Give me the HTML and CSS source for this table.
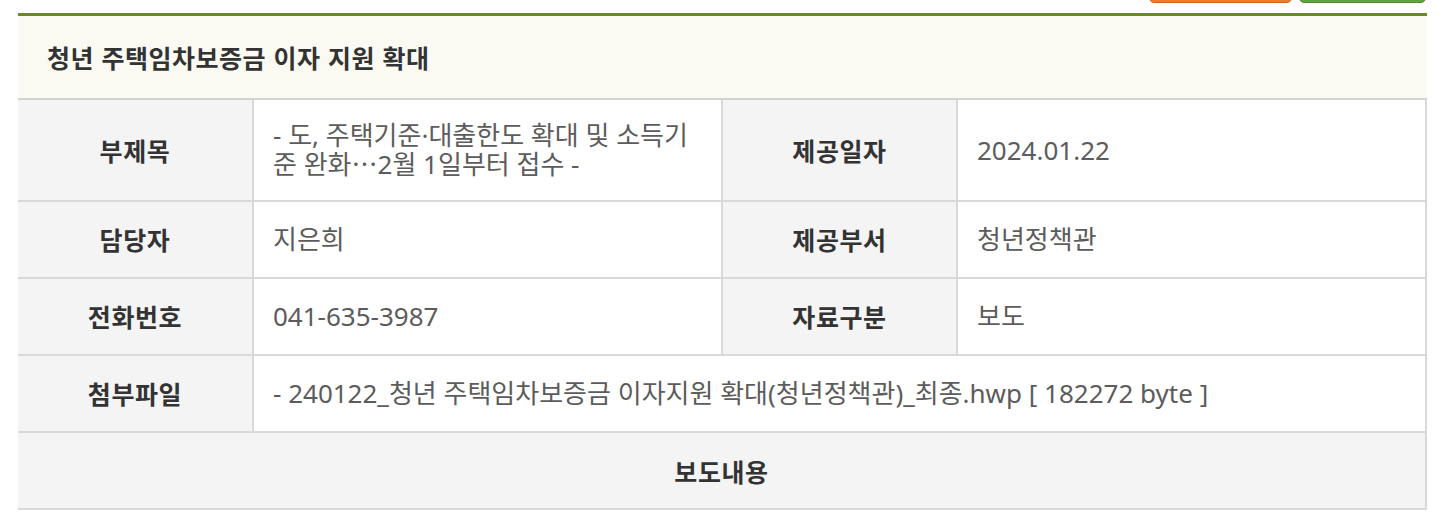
FILE: index.html
```html
<!DOCTYPE html>
<html lang="ko">
<head>
<meta charset="utf-8">
<title>청년 주택임차보증금 이자 지원 확대</title>
<link rel="stylesheet" href="styles.css">
</head>
<body>
<div class="wrap">
  <div class="btns">
    <a class="btn btn-orange" href="#">목록</a>
    <a class="btn btn-green" href="#">인쇄</a>
  </div>
  <div class="view">
    <h2 class="view-title">청년 주택임차보증금 이자 지원 확대</h2>
    <div class="info">
      <div class="th r1">부제목</div>
      <div class="td r1 wrapall">- 도, 주택기준·대출한도 확대 및 소득기준 완화<span class="cjk">…</span>2월 1일부터 접수 -</div>
      <div class="th r1">제공일자</div>
      <div class="td r1">2024.01.22</div>

      <div class="th">담당자</div>
      <div class="td">지은희</div>
      <div class="th">제공부서</div>
      <div class="td">청년정책관</div>

      <div class="th">전화번호</div>
      <div class="td">041-635-3987</div>
      <div class="th">자료구분</div>
      <div class="td">보도</div>

      <div class="th">첨부파일</div>
      <div class="td td-wide">- 240122_청년 주택임차보증금 이자지원 확대(청년정책관)_최종.hwp [ 182272 byte ]</div>

      <div class="th th-full">보도내용</div>
    </div>
  </div>
</div>
</body>
</html>
```

FILE: styles.css
```css
html, body {
  margin: 0;
  padding: 0;
  background: #fff;
}
body {
  font-family: "Noto Sans", "Noto Sans CJK KR", sans-serif;
  overflow: hidden;
}
.wrap {
  width: 1409px;
  margin-left: 18px;
}
.btns {
  display: flex;
  justify-content: flex-end;
  gap: 7px;
  height: 30px;
  margin-top: -27px;
}
.btn {
  display: block;
  box-sizing: border-box;
  height: 30px;
  border-radius: 0 0 5px 5px;
  color: #fff;
  font-size: 14px;
  text-decoration: none;
  text-align: center;
  line-height: 28px;
}
.btn-orange {
  width: 143px;
  background: #eb7d2c;
  border: 1px solid #d8621a;
}
.btn-green {
  width: 127px;
  margin-right: 1px;
  background: #61a33e;
  border: 1px solid #4d8f2f;
}
.view {
  margin-top: 10px;
  border-top: 3px solid #6a8b22;
}
.view-title {
  margin: 0;
  height: 84px;
  box-sizing: border-box;
  padding: 0 29px;
  display: flex;
  align-items: center;
  background: #fafaf3;
  border-bottom: 2px solid #d3d3d3;
  font-family: "Noto Sans CJK KR", sans-serif;
  font-size: 25px;
  font-weight: 700;
  letter-spacing: 0.5px;
  color: #333;
  line-height: 1;
}
.info {
  display: grid;
  grid-template-columns: 236px 469px 235px 469px;
}
.th, .td {
  box-sizing: border-box;
  border-right: 2px solid #d9d9d9;
  border-bottom: 2px solid #d9d9d9;
  line-height: 27px;
  padding: 24px 19px;
}
.th.r1, .td.r1 {
  padding-top: 22px;
  padding-bottom: 22px;
}
.th {
  background: #f4f4f4;
  color: #333;
  font-family: "Noto Sans CJK KR", sans-serif;
  font-size: 25px;
  font-weight: 700;
  letter-spacing: 0.6px;
  display: flex;
  align-items: center;
  justify-content: center;
  text-align: center;
}
.td {
  background: #fff;
  color: #5c5c5c;
  font-size: 26px;
  font-weight: 400;
  display: flex;
  align-items: center;
}
.wrapall {
  display: block;
  word-break: break-all;
}
.cjk {
  font-family: "Noto Sans CJK KR", sans-serif;
}
.td-wide {
  grid-column: span 3;
}
.th-full {
  grid-column: 1 / -1;
  padding: 25px 19px 23px;
}
```
